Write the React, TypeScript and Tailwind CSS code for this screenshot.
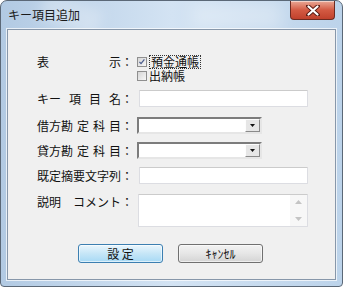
import React from "react";

const FONT = { fontFamily: '"Noto Sans CJK JP", "MS UI Gothic", sans-serif' };

// Justified dialog label, words spread across a fixed width, then colon
const Label = ({ text }: { text: string }) => (
  <div className="flex w-[96px] text-[12px] leading-[14px] text-[#111]">
    <div className="flex w-[84px] justify-between">
      {text.split(" ").map((w, i) => (
        <span key={i}>{w}</span>
      ))}
    </div>
    <span className="w-[12px] text-center">：</span>
  </div>
);

const CheckBox = ({ checked }: { checked?: boolean }) => (
  <div className="relative h-[10px] w-[10px] shrink-0 border border-[#8f8f8f] bg-gradient-to-br from-[#d6d6d6] to-[#f7f7f7]">
    {checked && (
      <svg viewBox="0 0 10 10" className="absolute inset-0 h-full w-full">
        <path d="M1.8 4.8 L3.8 7 L8 1.8" fill="none" stroke="#4c5d8e" strokeWidth="1.6" />
      </svg>
    )}
  </div>
);

const TextBox = ({ w }: { w: string }) => (
  <div className={`h-[17px] ${w} rounded-[1px] border border-[#dcdde2] border-t-[#cbcbcb] bg-white`} />
);

const Combo = () => (
  <div className="flex h-[17px] w-[125px] border-2 border-t-[#7c7c7c] border-l-[#7c7c7c] border-r-[#e6e6e6] border-b-[#e6e6e6] bg-white">
    <div className="flex-1" />
    <div className="flex w-[15px] items-center justify-center border border-t-[#fdfdfd] border-l-[#fdfdfd] border-r-[#8a8a8a] border-b-[#8a8a8a] bg-[#e6e6e6]">
      <svg width="5" height="3" viewBox="0 0 5 3">
        <path d="M0 0 H5 L2.5 3 Z" fill="#111" />
      </svg>
    </div>
  </div>
);

const App = () => {
  return (
    <div className="h-[287px] w-[343px] bg-white" style={FONT}>
      <div className="relative flex h-[287px] w-[343px] flex-col overflow-hidden rounded-t-[7px] rounded-b-[4px] border border-[#5b6877] bg-gradient-to-r from-[#b2cae3] via-[#d3e3f3] to-[#bcd3ea]">
        {/* glass streaks */}
        <div className="absolute left-[40px] top-[0px] h-[28px] w-[60px] rotate-[20deg] bg-white/25 blur-[6px]" />
        <div className="absolute right-[60px] top-[2px] h-[26px] w-[90px] bg-white/30 blur-[8px]" />

        {/* Title bar */}
        <div className="relative flex h-[28px] items-start">
          <span className="ml-[7px] mt-[7px] text-[12px] leading-[14px] text-[#1a1a1a]">キー項目追加</span>
          <div className="ml-auto mr-[7px] flex h-[19px] w-[45px] items-center justify-center rounded-b-[4px] border border-t-0 border-[#6d2a20] bg-gradient-to-b from-[#e8a896] via-[#d35a43] to-[#c0412c] shadow-[inset_0_1px_0_rgba(255,255,255,0.5)]">
            <svg width="14" height="11" viewBox="0 0 14 11">
              <path d="M2 1 L12 10 M12 1 L2 10" stroke="#5a1c14" strokeWidth="4" strokeLinecap="round" />
              <path d="M2.5 1.5 L11.5 9.5 M11.5 1.5 L2.5 9.5" stroke="#ffffff" strokeWidth="2.2" strokeLinecap="round" />
            </svg>
          </div>
        </div>

        {/* Client area */}
        <div className="relative mx-[6px] mb-[6px] flex-1 border border-[#8797aa] bg-[#f0f0f0] pl-[29px] pt-[25px] shadow-[0_0_0_1px_rgba(255,255,255,0.7)]">
          {/* 表示 */}
          <div className="flex items-start">
            <Label text="表 示" />
            <div className="ml-[4px] flex flex-col">
              <div className="flex h-[14px] items-center gap-[3px]">
                <CheckBox checked />
                <span className="px-[1px] text-[12px] leading-[12px] text-[#111] outline-1 outline-dotted outline-[#333]">預金通帳</span>
              </div>
              <div className="flex h-[14px] items-center gap-[2px]">
                <CheckBox />
                <span className="text-[12px] leading-[12px] text-[#111]">出納帳</span>
              </div>
            </div>
          </div>

          {/* キー項目名 */}
          <div className="mt-[7px] flex items-center">
            <Label text="キー 項 目 名" />
            <div className="ml-[6px]">
              <TextBox w="w-[169px]" />
            </div>
          </div>

          {/* 借方勘定科目 */}
          <div className="mt-[10px] flex items-center">
            <Label text="借方勘 定 科 目" />
            <div className="ml-[4px]">
              <Combo />
            </div>
          </div>

          {/* 貸方勘定科目 */}
          <div className="mt-[8px] flex items-center">
            <Label text="貸方勘 定 科 目" />
            <div className="ml-[4px]">
              <Combo />
            </div>
          </div>

          {/* 既定摘要文字列 */}
          <div className="mt-[8px] flex items-center">
            <Label text="既定摘要文字列" />
            <div className="ml-[6px]">
              <TextBox w="w-[169px]" />
            </div>
          </div>

          {/* 説明コメント */}
          <div className="mt-[10px] flex items-start">
            <div className="mt-[1px]">
              <Label text="説明 コメント" />
            </div>
            <div className="ml-[5px] flex h-[33px] w-[170px] rounded-[1px] border border-[#dcdde2] border-t-[#cbcbcb] bg-white">
              <div className="flex-1" />
              <div className="flex w-[17px] flex-col items-center justify-between bg-[#f7f7f7] py-[5px]">
                <svg width="7" height="4" viewBox="0 0 7 4">
                  <path d="M0 4 L3.5 0 L7 4 Z" fill="#c4c4c4" />
                </svg>
                <svg width="7" height="4" viewBox="0 0 7 4">
                  <path d="M0 0 L3.5 4 L7 0 Z" fill="#c4c4c4" />
                </svg>
              </div>
            </div>
          </div>

          {/* Buttons */}
          <div className="mt-[17px] flex gap-[15px] pl-[41px]">
            <button className="flex h-[19px] w-[85px] items-center justify-center rounded-[3px] border border-[#3c7fb1] bg-gradient-to-b from-[#eaf6fd] via-[#c6e6f7] to-[#a7d9f5] text-[12px] leading-[12px] text-[#111] shadow-[inset_0_0_0_1px_rgba(255,255,255,0.6)]">
              設 定
            </button>
            <button className="flex h-[19px] w-[85px] items-center justify-center rounded-[3px] border border-[#707070] bg-gradient-to-b from-[#f2f2f2] via-[#e6e6e6] to-[#d4d4d4] text-[12px] leading-[12px] text-[#111] shadow-[inset_0_0_0_1px_rgba(255,255,255,0.6)]">
              ｷｬﾝｾﾙ
            </button>
          </div>
        </div>
      </div>
    </div>
  );
};

export default App;
